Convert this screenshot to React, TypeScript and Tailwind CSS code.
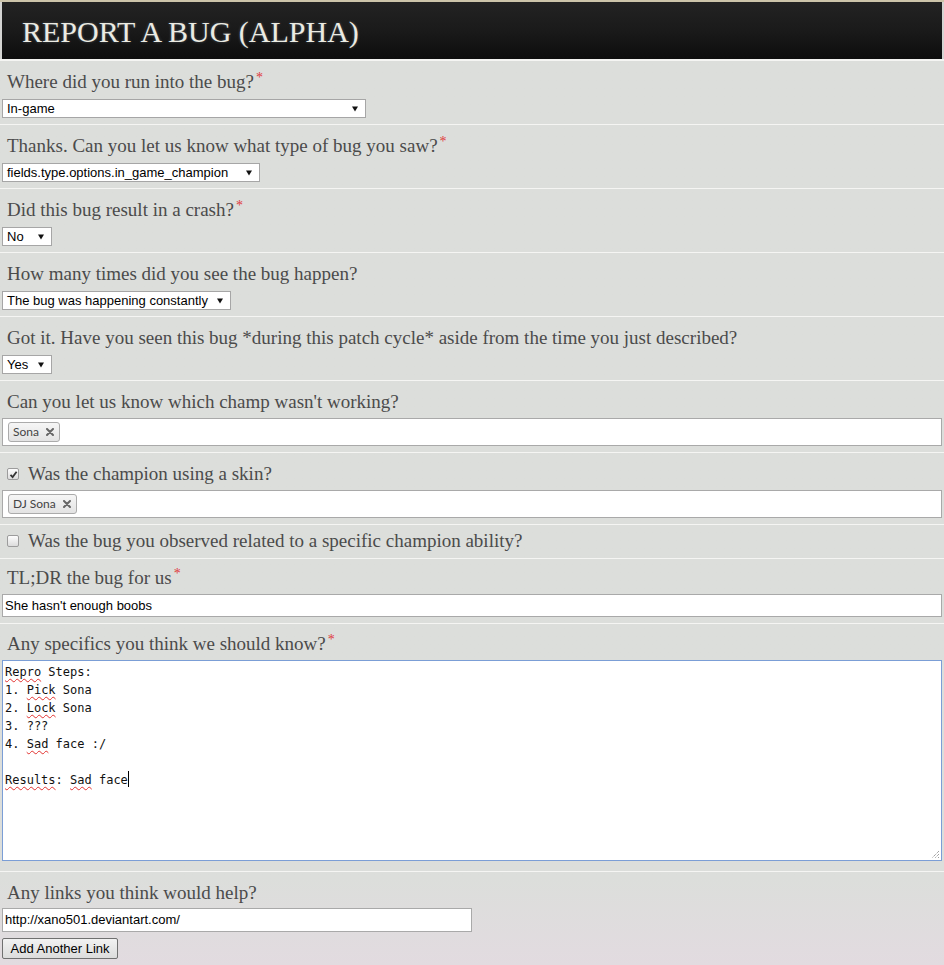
import React from "react";

const SANS = "font-['Liberation_Sans',Arial,sans-serif]";

function Req() {
  return <span className="relative -top-[6px] ml-[2px] text-[14px] leading-none text-[#e0393b]">*</span>;
}

function Label({ children, req }: { children: React.ReactNode; req?: boolean }) {
  return (
    <div className="h-[24px] pl-[5px] text-[19px] leading-[24px] text-[#4b4b4b] font-['Liberation_Serif','Times_New_Roman',serif] whitespace-nowrap">
      {children}
      {req && <Req />}
    </div>
  );
}

function Arrow() {
  return (
    <svg width="6" height="6" viewBox="0 0 6 6" className="shrink-0">
      <polygon points="0,0.5 6,0.5 3,5.5" fill="#111" />
    </svg>
  );
}

function Select({ w, value }: { w: string; value: string }) {
  return (
    <div
      className={`${w} mt-[5px] h-[19px] flex items-center justify-between bg-white border border-[#a6a6a6] pl-[4px] pr-[7px] text-[13px] leading-[17px] text-black ${SANS}`}
    >
      <span className="whitespace-nowrap">{value}</span>
      <Arrow />
    </div>
  );
}

function Chip({ text }: { text: string }) {
  return (
    <div className="h-[20px] flex items-center gap-[7px] pl-[4px] pr-[5px] rounded-[3px] border border-[#ababab] bg-linear-to-b from-[#f6f6f6] to-[#e3e3e3] text-[12px] text-[#444] font-['Lato','Open_Sans',sans-serif]">
      <span>{text}</span>
      <svg width="8" height="8" viewBox="0 0 8 8">
        <path d="M1 1 L7 7 M7 1 L1 7" stroke="#666" strokeWidth="2" strokeLinecap="round" />
      </svg>
    </div>
  );
}

function TagBox({ text }: { text: string }) {
  return (
    <div className="mt-[4px] h-[28px] w-full bg-white border border-[#a9a9a9] flex items-center pl-[5px]">
      <Chip text={text} />
    </div>
  );
}

function Checkbox({ checked }: { checked?: boolean }) {
  return (
    <span className="inline-flex items-center justify-center w-[12px] h-[12px] rounded-[2px] border border-[#9c9c9c] bg-linear-to-b from-[#fdfdfd] to-[#dcdcdc] shrink-0">
      {checked && (
        <svg width="9" height="9" viewBox="0 0 9 9">
          <path d="M1.5 4.8 L3.6 7 L7.6 1.8" stroke="#333" strokeWidth="1.8" fill="none" />
        </svg>
      )}
    </span>
  );
}

function Section({ pt, pb, children }: { pt: string; pb: string; children: React.ReactNode }) {
  return <div className={`border-t border-[#f5f5f3] px-[2px] ${pt} ${pb}`}>{children}</div>;
}

function Sp({ children }: { children: React.ReactNode }) {
  return (
    <span className="underline decoration-wavy decoration-[#e2322f] decoration-1 underline-offset-[2px]">
      {children}
    </span>
  );
}

export default function App() {
  return (
    <div className="w-full min-h-[965px] bg-linear-to-b from-[#dcdedb] from-[91%] to-[#e2dbe0]">
      {/* header */}
      <div className="border-t-[2px] border-b border-t-[#cdc4aa] border-b-[#f2f2f0] bg-[#d4d4d2] px-[2px]">
        <div className="h-[57px] bg-linear-to-b from-[#232323] via-[#1a1a1a] to-[#0d0d0d] pl-[20px] pt-[15px]">
          <div className="text-[30px] leading-[30px] text-[#ebebe3] font-['Liberation_Serif','Times_New_Roman',serif] [text-shadow:0_0_3px_rgba(180,200,220,0.35)]">
            REPORT A BUG (ALPHA)
          </div>
        </div>
      </div>

      <Section pt="pt-[9px]" pb="pb-[6px]">
        <Label req>Where did you run into the bug?</Label>
        <Select w="w-[364px]" value="In-game" />
      </Section>

      <Section pt="pt-[9px]" pb="pb-[6px]">
        <Label req>Thanks. Can you let us know what type of bug you saw?</Label>
        <Select w="w-[258px]" value="fields.type.options.in_game_champion" />
      </Section>

      <Section pt="pt-[9px]" pb="pb-[6px]">
        <Label req>Did this bug result in a crash?</Label>
        <Select w="w-[50px]" value="No" />
      </Section>

      <Section pt="pt-[9px]" pb="pb-[6px]">
        <Label>How many times did you see the bug happen?</Label>
        <Select w="w-[229px]" value="The bug was happening constantly" />
      </Section>

      <Section pt="pt-[9px]" pb="pb-[6px]">
        <Label>Got it. Have you seen this bug *during this patch cycle* aside from the time you just described?</Label>
        <Select w="w-[50px]" value="Yes" />
      </Section>

      <Section pt="pt-[9px]" pb="pb-[6px]">
        <Label>Can you let us know which champ wasn't working?</Label>
        <TagBox text="Sona" />
      </Section>

      <Section pt="pt-[9px]" pb="pb-[6px]">
        <div className="h-[24px] flex items-center gap-[9px] pl-[5px]">
          <Checkbox checked />
          <div className="text-[19px] leading-[24px] text-[#4b4b4b] font-['Liberation_Serif','Times_New_Roman',serif]">
            Was the champion using a skin?
          </div>
        </div>
        <TagBox text="DJ Sona" />
      </Section>

      <Section pt="pt-[4px]" pb="pb-[5px]">
        <div className="h-[24px] flex items-center gap-[9px] pl-[5px]">
          <Checkbox />
          <div className="text-[19px] leading-[24px] text-[#4b4b4b] font-['Liberation_Serif','Times_New_Roman',serif]">
            Was the bug you observed related to a specific champion ability?
          </div>
        </div>
      </Section>

      <Section pt="pt-[7px]" pb="pb-[6px]">
        <Label req>TL;DR the bug for us</Label>
        <div className={`mt-[4px] h-[23px] w-full bg-white border border-[#a9a9a9] flex items-center pl-[2px] text-[13px] text-black ${SANS}`}>
          She hasn't enough boobs
        </div>
      </Section>

      <Section pt="pt-[8px]" pb="pb-[10px]">
        <Label req>Any specifics you think we should know?</Label>
        <div className="relative mt-[4px] h-[201px] w-full bg-white border border-[#7b9ed6] pl-[2px] pt-[2px] text-[12px] leading-[18px] text-[#111] font-['DejaVu_Sans_Mono','Liberation_Mono',monospace] whitespace-pre">
          <div><Sp>Repro</Sp> Steps:</div>
          <div>1. <Sp>Pick</Sp> Sona</div>
          <div>2. <Sp>Lock</Sp> Sona</div>
          <div>3. ???</div>
          <div>4. <Sp>Sad</Sp> face :/</div>
          <div>&nbsp;</div>
          <div>
            <Sp>Results</Sp>: <Sp>Sad</Sp> face
            <span className="inline-block w-[1px] h-[16px] bg-black align-[-3px]" />
          </div>
          <svg width="10" height="10" viewBox="0 0 10 10" className="absolute right-[1px] bottom-[1px]">
            <path d="M9 2 L2 9 M9 5 L5 9 M9 8 L8 9" stroke="#777" strokeWidth="1" strokeDasharray="1 1" />
          </svg>
        </div>
      </Section>

      <Section pt="pt-[9px]" pb="pb-[6px]">
        <Label>Any links you think would help?</Label>
        <div className={`mt-[3px] h-[24px] w-[470px] bg-white border border-[#a9a9a9] flex items-center pl-[2px] text-[13px] text-black ${SANS}`}>
          http://xano501.deviantart.com/
        </div>
        <button
          className={`mt-[6px] h-[21px] w-[116px] rounded-[2px] border border-[#707070] bg-linear-to-b from-[#f2f2f2] to-[#dcdcdc] text-[13px] text-black ${SANS} flex items-center justify-center`}
        >
          Add Another Link
        </button>
      </Section>
    </div>
  );
}
